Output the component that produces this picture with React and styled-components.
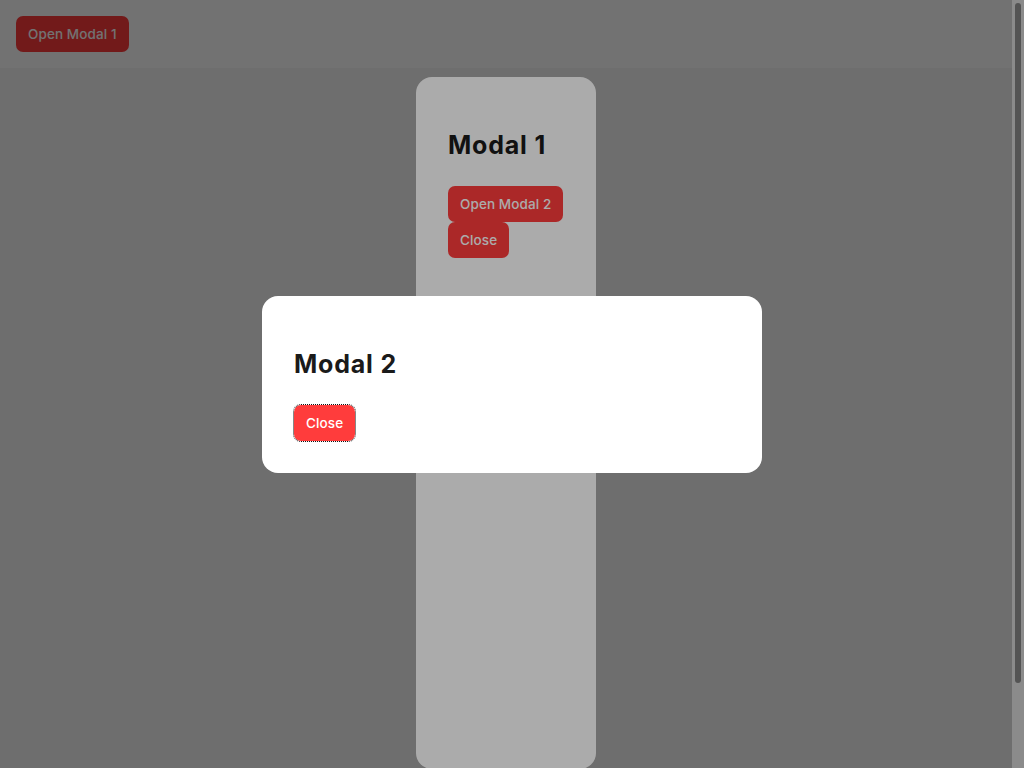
import React from "react";
import styled, { createGlobalStyle } from "styled-components";

const GlobalStyle = createGlobalStyle`
  html, body {
    margin: 0;
    padding: 0;
  }
  body {
    background: #f5f5f5;
    font-family: Inter, "Noto Sans", "Liberation Sans", sans-serif;
    color: #1a1a1a;
  }
`;

const Header = styled.header`
  box-sizing: border-box;
  height: 68px;
  padding: 16px;
  background: #ffffff;
  display: flex;
  align-items: flex-start;
`;

const Button = styled.button`
  box-sizing: border-box;
  height: 36px;
  padding: 0 12px;
  border: none;
  border-radius: 7px;
  background: #ff3c3c;
  color: #ffffff;
  font-family: Inter, "Noto Sans", sans-serif;
  font-size: 13.5px;
  font-weight: 500;
  line-height: 36px;
  letter-spacing: 0.1px;
  white-space: nowrap;
  cursor: pointer;
  outline: ${(p) => (p.$focused ? "1px dotted #111" : "none")};
  outline-offset: 0;
`;

const Backdrop = styled.div`
  position: fixed;
  inset: 0;
  width: 100vw;
  height: 100vh;
  background: rgba(0, 0, 0, 0.33);
  z-index: ${(p) => p.$layer};
`;

const SheetLayer = styled.div`
  position: absolute;
  top: 0;
  left: 0;
  right: 12px;
  z-index: 20;
  display: flex;
  justify-content: center;
  padding: 77px 0 95px;
`;

const SideModal = styled.section`
  box-sizing: border-box;
  width: 180px;
  height: 692px;
  padding: 32px;
  background: #ffffff;
  border-radius: 16px;
`;

const DialogLayer = styled.div`
  position: fixed;
  top: 0;
  left: 0;
  width: 100vw;
  height: 100vh;
  z-index: 40;
  display: flex;
  align-items: center;
  justify-content: center;
`;

const Dialog = styled.section`
  box-sizing: border-box;
  width: 500px;
  padding: 32px;
  background: #ffffff;
  border-radius: 16px;
`;

const Title = styled.h2`
  margin: 22px 0 26px;
  font-size: 25px;
  line-height: 29px;
  font-weight: 700;
  color: #1a1a1a;
  letter-spacing: 0.8px;
`;

const Actions = styled.div`
  display: flex;
  flex-direction: column;
  align-items: flex-start;
`;

const ScrollTrack = styled.div`
  position: fixed;
  top: 0;
  right: 0;
  width: 12px;
  height: 100vh;
  background: #8b8b8b;
  z-index: 50;
  display: flex;
  justify-content: center;
  padding-top: 3px;
  box-sizing: border-box;
`;

const ScrollThumb = styled.div`
  width: 6px;
  height: 680px;
  border-radius: 3px;
  background: #545454;
`;

export default function App() {
  return (
    <>
      <GlobalStyle />
      <Header>
        <Button>Open Modal 1</Button>
      </Header>
      <Backdrop $layer={10} />
      <SheetLayer>
        <SideModal>
          <Title>Modal 1</Title>
          <Actions>
            <Button>Open Modal 2</Button>
            <Button>Close</Button>
          </Actions>
        </SideModal>
      </SheetLayer>
      <Backdrop $layer={30} />
      <DialogLayer>
        <Dialog>
          <Title>Modal 2</Title>
          <Actions>
            <Button $focused>Close</Button>
          </Actions>
        </Dialog>
      </DialogLayer>
      <ScrollTrack aria-hidden="true">
        <ScrollThumb />
      </ScrollTrack>
    </>
  );
}
